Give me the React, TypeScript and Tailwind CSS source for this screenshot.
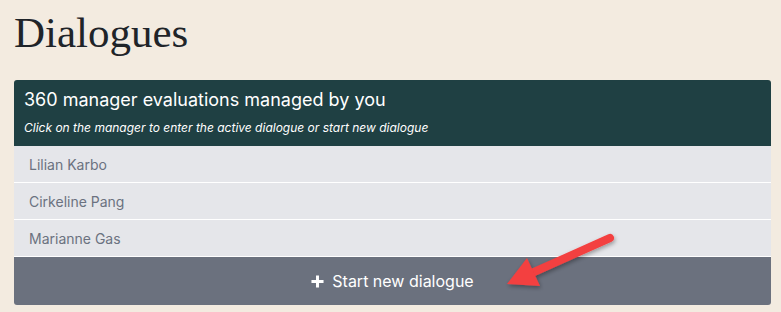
const managers = ["Lilian Karbo", "Cirkeline Pang", "Marianne Gas"];

const PlusIcon = () => (
  <svg width="13" height="13" viewBox="0 0 14 14" className="shrink-0">
    <path d="M5.4 0.5h3.2v4.9h4.9v3.2h-4.9v4.9h-3.2v-4.9h-4.9v-3.2h4.9z" fill="#ffffff" />
  </svg>
);

const Arrow = () => (
  <svg
    width="140"
    height="80"
    viewBox="0 0 140 80"
    className="absolute left-[490px] top-[225px] pointer-events-none"
  >
    <defs>
      <filter id="arrow-shadow" x="-20%" y="-30%" width="140%" height="160%">
        <feDropShadow dx="1" dy="2" stdDeviation="2" floodColor="#000" floodOpacity="0.35" />
      </filter>
    </defs>
    <g filter="url(#arrow-shadow)">
      <line x1="120" y1="13" x2="44" y2="47" stroke="#f33f3f" strokeWidth="8" strokeLinecap="round" />
      <path d="M17 59 L37 33 L50 61 Z" fill="#f33f3f" />
    </g>
  </svg>
);

export default function App() {
  return (
    <div className="relative min-h-[312px] bg-[#f3ebe0] px-[14px] pt-[6px] pb-[7px] font-['Inter',sans-serif]">
      <h1 className="font-['Liberation_Serif',serif] text-[43px] leading-[53px] text-[#1f2429]">Dialogues</h1>

      <div className="mt-[21px] w-[757px] overflow-hidden rounded-[3px]">
        <div className="bg-[#1f4043] px-[10px] pt-[7px] pb-[8px] text-white">
          <div className="text-[18px] leading-[26px]">360 manager evaluations managed by you</div>
          <div className="mt-[5px] text-[12px] leading-[20px] italic">
            Click on the manager to enter the active dialogue or start new dialogue
          </div>
        </div>

        {managers.map((name) => (
          <div
            key={name}
            className="flex h-[37px] items-center border-b border-white bg-[#e5e6ea] px-[15px] text-[14px] text-[#6b7280]"
          >
            {name}
          </div>
        ))}

        <button className="flex h-[48px] w-full items-center justify-center gap-[8px] bg-[#6b717e] text-[16px] text-white">
          <PlusIcon />
          <span>Start new dialogue</span>
        </button>
      </div>

      <Arrow />
    </div>
  );
}
